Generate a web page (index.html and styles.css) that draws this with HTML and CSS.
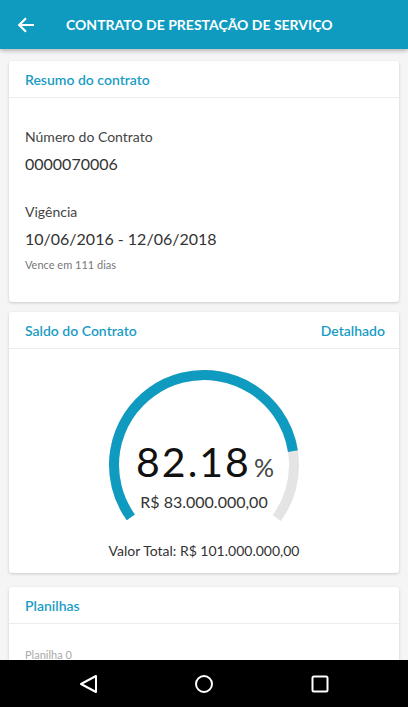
FILE: index.html
```html
<!DOCTYPE html>
<html lang="pt-BR">
<head>
    <meta charset="UTF-8">
    <meta name="viewport" content="width=device-width, initial-scale=1.0">
    <title>Contrato de Prestação de Serviço</title>
    <link rel="stylesheet" href="styles.css">
</head>
<body>
    <div class="screen">
        <header class="topbar">
            <svg class="back" width="18" height="18" viewBox="0 0 18 18">
                <path d="M17 9H2.5M9 2.2L2.2 9 9 15.8" fill="none" stroke="#fff" stroke-width="2.2"/>
            </svg>
            <h1>CONTRATO DE PRESTAÇÃO DE SERVIÇO</h1>
        </header>

        <main class="content">
            <section class="card">
                <div class="card-head">
                    <span>Resumo do contrato</span>
                </div>
                <div class="card-body summary">
                    <div class="label">Número do Contrato</div>
                    <div class="value">0000070006</div>
                    <div class="label second">Vigência</div>
                    <div class="value">10/06/2016 - 12/06/2018</div>
                    <div class="hint">Vence em 111 dias</div>
                </div>
            </section>

            <section class="card">
                <div class="card-head">
                    <span>Saldo do Contrato</span>
                    <span>Detalhado</span>
                </div>
                <div class="card-body balance">
                    <div class="gauge">
                        <svg width="200" height="165" viewBox="0 0 200 165">
                            <circle cx="100" cy="100" r="90" fill="none" stroke="#e4e4e4" stroke-width="10"
                                stroke-dasharray="394.6 600" transform="rotate(144.4 100 100)"/>
                            <circle cx="100" cy="100" r="90" fill="none" stroke="#0e9bbf" stroke-width="10"
                                stroke-dasharray="324.3 600" transform="rotate(144.4 100 100)"/>
                        </svg>
                        <div class="gauge-text">
                            <div class="percent">82.18<small>%</small></div>
                            <div class="amount">R$ 83.000.000,00</div>
                        </div>
                    </div>
                    <div class="total">Valor Total: R$ 101.000.000,00</div>
                </div>
            </section>

            <section class="card sheets-card">
                <div class="card-head">
                    <span>Planilhas</span>
                </div>
                <div class="card-body sheets">
                    <div class="hint light">Planilha 0</div>
                </div>
            </section>
        </main>

        <nav class="navbar">
            <svg width="20" height="20" viewBox="0 0 20 20">
                <path d="M18 2V18L3 10Z" fill="none" stroke="#fff" stroke-width="2" stroke-linejoin="round"/>
            </svg>
            <svg width="20" height="20" viewBox="0 0 20 20">
                <circle cx="10" cy="10" r="8" fill="none" stroke="#fff" stroke-width="2"/>
            </svg>
            <svg width="20" height="20" viewBox="0 0 20 20">
                <rect x="2.5" y="2.5" width="15" height="15" rx="1.5" fill="none" stroke="#fff" stroke-width="2"/>
            </svg>
        </nav>
    </div>
</body>
</html>
```

FILE: styles.css
```css
body {
    margin: 0;
    font-family: 'Lato', 'Open Sans', sans-serif;
    background: #f5f5f5;
    color: #333;
}
.screen {
    display: flex;
    flex-direction: column;
    height: 707px;
    overflow: hidden;
}
.topbar {
    display: flex;
    align-items: center;
    height: 49px;
    flex-shrink: 0;
    background: #0e9bbf;
    box-shadow: 0 2px 4px rgba(0,0,0,0.25);
    position: relative;
    z-index: 1;
}
.back {
    margin-left: 17px;
}
.topbar h1 {
    margin: 0 0 0 31px;
    font-size: 14px;
    font-weight: bold;
    color: #fff;
}
.content {
    flex: 1;
    overflow: hidden;
    padding: 12px 9px 0;
    display: flex;
    flex-direction: column;
    gap: 10px;
}
.card {
    background: #fff;
    border-radius: 3px;
    box-shadow: 0 1px 3px rgba(0,0,0,0.18);
    flex-shrink: 0;
}
.card-head {
    display: flex;
    justify-content: space-between;
    align-items: center;
    height: 36px;
    padding: 0 14px 0 16px;
    border-bottom: 1px solid #ececec;
    color: #1a9cc4;
    font-size: 14px;
    font-weight: 600;
}
.summary {
    padding: 29px 16px 30px;
}
.label {
    font-size: 14px;
    color: #444;
    line-height: 20px;
}
.label.second {
    margin-top: 27px;
}
.value {
    font-size: 16px;
    color: #333;
    line-height: 22px;
    margin-top: 6px;
}
.hint {
    font-size: 11px;
    color: #777;
    margin-top: 8px;
    line-height: 14px;
}
.hint.light {
    color: #aaa;
    margin-top: 0;
}
.balance {
    padding-top: 16px;
    height: 208px;
    display: flex;
    flex-direction: column;
    align-items: center;
}
.gauge {
    position: relative;
    width: 200px;
    height: 165px;
}
.gauge-text {
    position: absolute;
    left: 0;
    right: 0;
    top: 72px;
    text-align: center;
}
.percent {
    font-size: 41px;
    line-height: 50px;
    letter-spacing: 2px;
    color: #111;
    padding-left: 2px;
}
.percent small {
    font-size: 25px;
    letter-spacing: 0;
    color: #444;
    margin-left: 3px;
}
.amount {
    font-size: 16px;
    color: #333;
}
.total {
    margin-top: 12px;
    font-size: 14px;
    color: #333;
}
.sheets-card {
    margin-top: 4px;
}
.sheets {
    padding: 24px 16px 20px;
}
.navbar {
    height: 47px;
    flex-shrink: 0;
    background: #000;
    display: flex;
    justify-content: center;
    align-items: center;
    gap: 96px;
}
```
